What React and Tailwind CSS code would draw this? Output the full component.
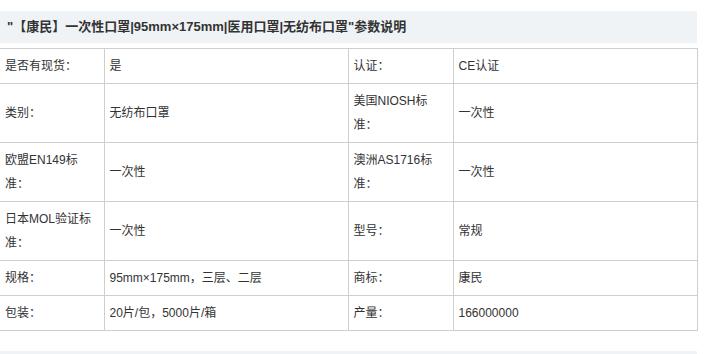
const rows = [
    ['是否有现货：', '是', '认证：', 'CE认证'],
    ['类别：', '无纺布口罩', '美国NIOSH标准：', '一次性'],
    ['欧盟EN149标准：', '一次性', '澳洲AS1716标准：', '一次性'],
    ['日本MOL验证标准：', '一次性', '型号：', '常规'],
    ['规格：', '95mm×175mm，三层、二层', '商标：', '康民'],
    ['包装：', '20片/包，5000片/箱', '产量：', '166000000'],
];

const cell = 'border border-[#cfcfcf] px-[5px] py-[5px] leading-6 align-middle break-all';

export default function App() {
    return (
        <div className="min-h-screen bg-white text-[#333] text-xs" style={{ fontFamily: '"Liberation Sans", "Noto Sans CJK SC", sans-serif' }}>
            <div className="pt-[11px]">
                <div className="w-[697px] h-8 bg-[#f0f3f6] pl-[7px] text-[13px] font-bold leading-8">
                    "【康民】一次性口罩|95mm×175mm|医用口罩|无纺布口罩"参数说明
                </div>
                <table className="mt-[5px] w-[697px] table-fixed border-collapse">
                    <colgroup>
                        <col className="w-[104px]" />
                        <col className="w-[244px]" />
                        <col className="w-[105px]" />
                        <col className="w-[244px]" />
                    </colgroup>
                    <tbody>
                        {rows.map((r, i) => (
                            <tr key={i}>
                                <td className={`${cell} border-l-0`}>{r[0]}</td>
                                <td className={cell}>{r[1]}</td>
                                <td className={cell}>{r[2]}</td>
                                <td className={cell}>{r[3]}</td>
                            </tr>
                        ))}
                    </tbody>
                </table>
                <div className="mt-5 w-[697px] h-3 bg-[#f0f3f6]" />
            </div>
        </div>
    );
}
